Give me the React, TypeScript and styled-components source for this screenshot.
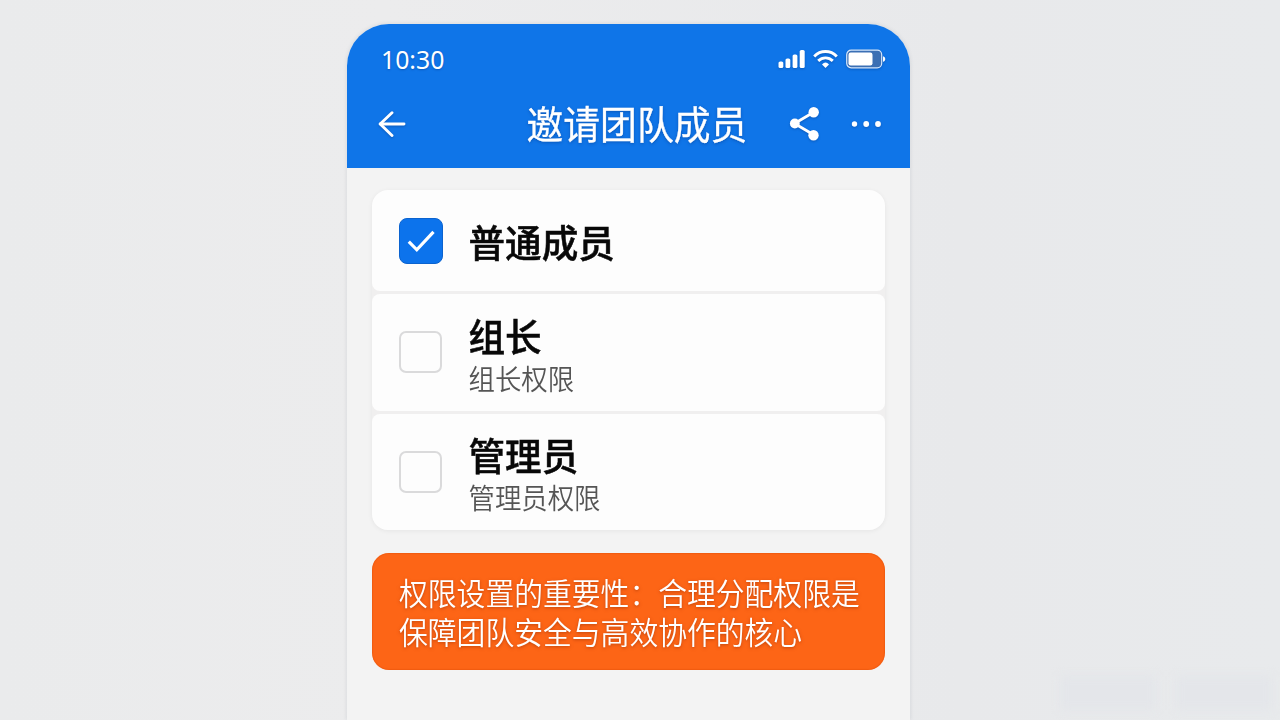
import React from 'react';
import styled, { createGlobalStyle } from 'styled-components';

interface Role {
    id: string;
    name: string;
    description?: string;
    height: number;
    checked?: boolean;
}

const ROLES: Role[] = [
    { id: 'member', name: '普通成员', height: 101, checked: true },
    { id: 'leader', name: '组长', description: '组长权限', height: 117 },
    { id: 'admin', name: '管理员', description: '管理员权限', height: 116 },
];

const GlobalStyle = createGlobalStyle`
    * {
        box-sizing: border-box;
    }

    body {
        margin: 0;
        background: #e9eaeb;
        font-family: 'Noto Sans CJK SC', 'Noto Sans', sans-serif;
    }
`;

const Page = styled.main`
    position: relative;
    display: flex;
    height: 720px;
    padding: 24px 0 0 347px;
    overflow: hidden;
    background: linear-gradient(90deg, #eaebec 0%, #ececed 30%, #e8e9eb 75%, #e8eaec 100%);
`;

// Faint smudge in the page corner
const CornerSmudge = styled.div`
    position: absolute;
    right: 8px;
    bottom: 10px;
    display: flex;
    gap: 20px;
    filter: blur(5px);

    &::before,
    &::after {
        width: 96px;
        height: 34px;
        background: #e4e6ea;
        content: '';
    }
`;

const Phone = styled.section`
    display: flex;
    flex-direction: column;
    width: 563px;
    height: 696px;
    overflow: hidden;
    border-radius: 42px 42px 0 0;
    background: #f3f3f3;
    box-shadow: 0 0 4px rgba(60, 70, 90, 0.14);
`;

const Header = styled.header`
    flex: none;
    height: 143.5px;
    background: #0f75e8;
    color: #fff;
`;

const StatusBar = styled.div`
    display: flex;
    align-items: center;
    justify-content: space-between;
    height: 70px;
    padding: 0 24px 0 34px;
`;

const Time = styled.span`
    font-family: 'Noto Sans', sans-serif;
    font-size: 24.8px;
    line-height: 70px;
    text-shadow: 0 1px 2px rgba(0, 40, 110, 0.35);
`;

const StatusIcons = styled.div`
    display: flex;
    align-items: center;
`;

const Icon = styled.svg<{ $gap?: number }>`
    display: block;
    margin-left: ${({ $gap = 0 }) => $gap}px;
    overflow: visible;
    filter: drop-shadow(0 1px 1px rgba(0, 40, 110, 0.35));
`;

const Toolbar = styled.div`
    display: flex;
    align-items: center;
    height: 60px;
    padding: 0 28.5px 0 30px;
`;

const IconButton = styled.button<{ $gap?: number }>`
    margin: 0 0 0 ${({ $gap = 0 }) => $gap}px;
    padding: 0;
    border: 0;
    background: transparent;
    color: inherit;
`;

const Title = styled.h1`
    width: 222px;
    margin: 0 0 0 auto;
    padding-bottom: 3px;
    font-size: 36.8px;
    font-weight: 400;
    line-height: 57px;
    white-space: nowrap;
    transform: scaleY(1.05);
    -webkit-text-stroke: 0.3px #fff;
    text-shadow: 0 1px 3px rgba(0, 40, 110, 0.45);
`;

const Content = styled.div`
    display: flex;
    flex-direction: column;
    gap: 23px;
    padding: 22px 25.5px 0 25px;
`;

const RoleList = styled.div`
    display: flex;
    flex-direction: column;
    gap: 3px;
    border-radius: 16px;
    background: #f0efef;
    box-shadow: 0 1px 5px rgba(0, 0, 0, 0.06);
`;

const RoleRow = styled.label<{ $height: number }>`
    display: flex;
    align-items: center;
    gap: 27px;
    height: ${({ $height }) => $height}px;
    padding-left: 27px;
    border-radius: 8px;
    background: #fdfdfd;

    &:first-child {
        padding-top: 2px;
        border-radius: 16px 16px 8px 8px;
    }

    &:last-child {
        border-radius: 8px 8px 16px 16px;
    }
`;

const Checkbox = styled.span<{ $checked?: boolean }>`
    display: flex;
    align-items: center;
    justify-content: center;
    width: ${({ $checked }) => ($checked ? 44 : 43)}px;
    height: ${({ $checked }) => ($checked ? 46 : 42)}px;
    margin-right: ${({ $checked }) => ($checked ? -1 : 0)}px;
    border: ${({ $checked }) => ($checked ? '1px solid #0b63cf' : '2px solid #dadadb')};
    border-radius: ${({ $checked }) => ($checked ? 8 : 7)}px;
    background: ${({ $checked }) => ($checked ? '#0c73ec' : '#fdfdfd')};
`;

const RoleText = styled.div<{ $offset: number }>`
    display: flex;
    flex-direction: column;
    margin-left: -0.5px;
    padding-top: ${({ $offset }) => $offset}px;
`;

const RoleName = styled.span`
    color: #080808;
    font-size: 36.6px;
    font-weight: 500;
    line-height: 46px;
    transform: scaleY(1.04);
    -webkit-text-stroke: 0.5px #080808;
`;

const RoleDescription = styled.span`
    color: #555;
    font-size: 26.4px;
    font-weight: 350;
    line-height: 40px;
    transform: scaleY(1.06);
`;

const Notice = styled.div`
    height: 117px;
    padding: 19px 0 0 27px;
    border-radius: 17px;
    background: #fd6516;
    box-shadow: inset 0 0 1px 1px rgba(220, 75, 5, 0.35);
`;

const NoticeLine = styled.p`
    margin: 0;
    color: #fff;
    font-size: 28.8px;
    font-weight: 350;
    line-height: 39px;
    white-space: nowrap;
    transform: scaleY(1.06);
    text-shadow: 0 1px 3px rgba(130, 35, 0, 0.5);
`;

const SignalIcon = () => (
    <Icon width='27' height='20' viewBox='0 0 27 20' fill='#fff'>
        <rect x='0.5' y='12.5' width='4.8' height='6.5' rx='1.6' />
        <rect x='7.5' y='9.5' width='4.8' height='9.5' rx='1.6' />
        <rect x='14.6' y='5.5' width='4.8' height='13.5' rx='1.6' />
        <rect x='21.7' y='1' width='5' height='18' rx='1.6' />
    </Icon>
);

const WifiIcon = () => (
    <Icon width='25' height='20' viewBox='0 0 25 20' fill='none' stroke='#fff' strokeWidth='2.9' $gap={8}>
        <path d='M1.2 7.4C7.5 0.9 17.5 0.9 23.8 7.4' />
        <path d='M5.2 11.9C9.4 7.8 15.6 7.8 19.8 11.9' />
        <path d='M9 15.4Q12.5 11.8 16 15.4L12.5 19Z' fill='#fff' stroke='none' />
    </Icon>
);

const BatteryIcon = () => (
    <Icon width='40' height='20' viewBox='0 0 40 20' $gap={8}>
        <rect x='0.7' y='1.2' width='35' height='17.6' rx='4.5' fill='#3b6fb4' stroke='#d6e7fb' strokeWidth='1.2' />
        <rect x='2.5' y='3.5' width='24' height='13' rx='2.2' fill='#fff' />
        <path d='M37 7.2c3 .6 3 5 0 5.6z' fill='#fff' />
    </Icon>
);

const BackIcon = () => (
    <Icon width='30' height='28' viewBox='0 0 30 28' fill='none' stroke='#fff' strokeWidth='2.9' strokeLinecap='round' strokeLinejoin='round'>
        <path d='M15 2.8L3.2 14L15 25.5' />
        <path d='M3.2 14H27' />
    </Icon>
);

const ShareIcon = () => (
    <Icon width='31' height='36' viewBox='0 0 31 36' fill='#fff'>
        <path d='M24 6L4.5 17.5L24 29' fill='none' stroke='#fff' strokeWidth='2.8' />
        <circle cx='23.7' cy='6.3' r='5.2' />
        <circle cx='4.8' cy='17.5' r='4.9' />
        <circle cx='23.5' cy='29.3' r='5.2' />
    </Icon>
);

const MoreIcon = () => (
    <Icon width='30' height='8' viewBox='0 0 30 8' fill='#fff'>
        <circle cx='2.5' cy='4' r='2.7' />
        <circle cx='14.2' cy='4' r='2.9' />
        <circle cx='26' cy='4' r='2.9' />
    </Icon>
);

const CheckIcon = () => (
    <svg width='28' height='24' viewBox='0 0 28 24' fill='none' stroke='#fff' strokeWidth='3.2'>
        <path d='M1.8 12.6L9.8 20.8L26.5 2.8' />
    </svg>
);

const App = () => (
    <>
        <GlobalStyle />
        <Page>
            <Phone>
                <Header>
                    <StatusBar>
                        <Time>10:30</Time>
                        <StatusIcons>
                            <SignalIcon />
                            <WifiIcon />
                            <BatteryIcon />
                        </StatusIcons>
                    </StatusBar>
                    <Toolbar>
                        <IconButton aria-label='返回'>
                            <BackIcon />
                        </IconButton>
                        <Title>邀请团队成员</Title>
                        <IconButton aria-label='分享' $gap={41}>
                            <ShareIcon />
                        </IconButton>
                        <IconButton aria-label='更多' $gap={31}>
                            <MoreIcon />
                        </IconButton>
                    </Toolbar>
                </Header>
                <Content>
                    <RoleList>
                        {ROLES.map((role) => (
                            <RoleRow
                                key={role.id}
                                $height={role.height}
                            >
                                <Checkbox $checked={role.checked}>
                                    {role.checked && <CheckIcon />}
                                </Checkbox>
                                <RoleText $offset={role.description ? 5 : 0}>
                                    <RoleName>{role.name}</RoleName>
                                    {role.description && (
                                        <RoleDescription>{role.description}</RoleDescription>
                                    )}
                                </RoleText>
                            </RoleRow>
                        ))}
                    </RoleList>
                    <Notice>
                        <NoticeLine>权限设置的重要性：合理分配权限是</NoticeLine>
                        <NoticeLine>保障团队安全与高效协作的核心</NoticeLine>
                    </Notice>
                </Content>
            </Phone>
            <CornerSmudge />
        </Page>
    </>
);

export default App;
